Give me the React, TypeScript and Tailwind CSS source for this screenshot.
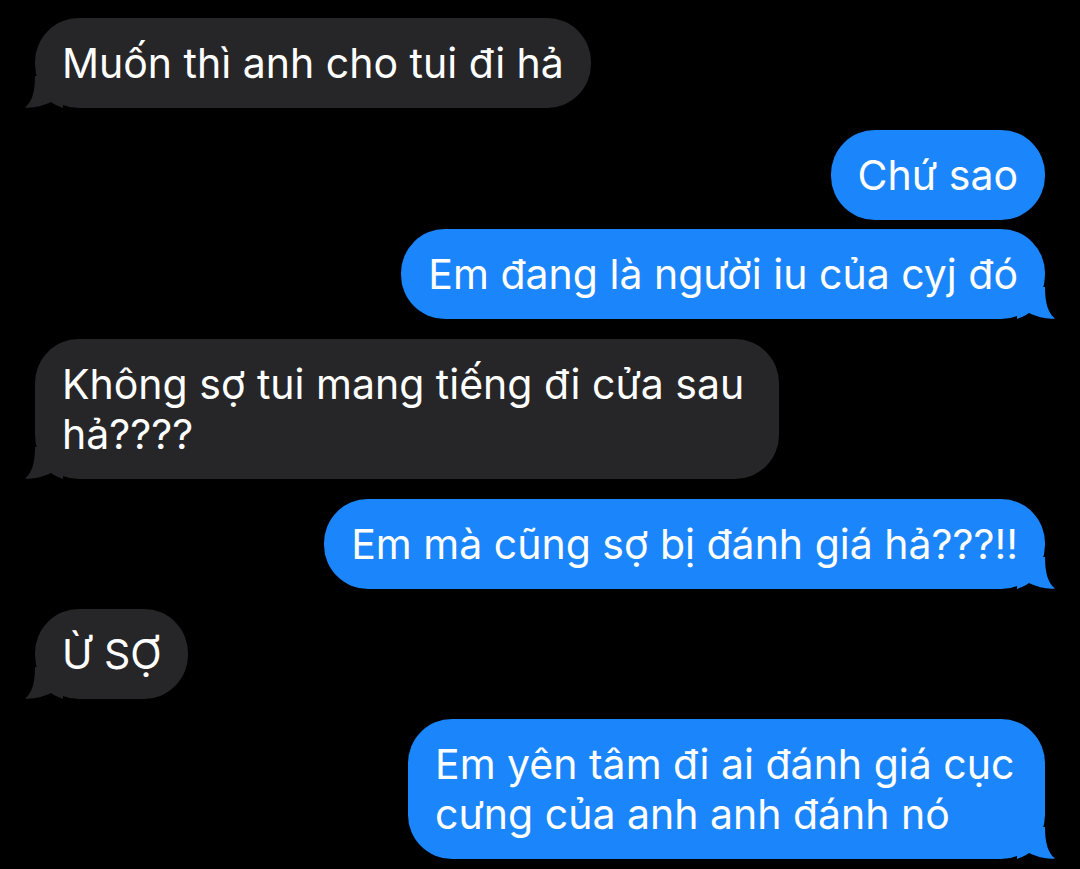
const GRAY = '#262628';
const BLUE = '#1b86fb';

type Msg = { text: string; me: boolean; tail: boolean; gap: string; width?: string };

const MESSAGES: Msg[] = [
  { text: 'Muốn thì anh cho tui đi hả', me: false, tail: true, gap: 'mt-0' },
  { text: 'Chứ sao', me: true, tail: false, gap: 'mt-[22px]' },
  { text: 'Em đang là người iu của cyj đó', me: true, tail: true, gap: 'mt-[9px]' },
  { text: 'Không sợ tui mang tiếng đi cửa sau hả????', me: false, tail: true, gap: 'mt-[20px]', width: 'w-[744px]' },
  { text: 'Em mà cũng sợ bị đánh giá hả???!!', me: true, tail: true, gap: 'mt-[20px]' },
  { text: 'Ừ SỢ', me: false, tail: true, gap: 'mt-[20px]' },
  { text: 'Em yên tâm đi ai đánh giá cục cưng của anh anh đánh nó', me: true, tail: true, gap: 'mt-[20px]', width: 'w-[637px]' },
];

function Tail({ me }: { me: boolean }) {
  return (
    <svg
      width="40"
      height="32"
      viewBox="0 0 40 32"
      className={me ? 'absolute -right-3 bottom-0' : 'absolute -left-3 bottom-0 -scale-x-100'}
      aria-hidden
    >
      <path
        d="M0 0 H28 C28 16 31 26 38 31.5 C31 32.5 20 30 12 26 C8 29 4 30.5 0 32 Z"
        fill={me ? BLUE : GRAY}
      />
    </svg>
  );
}

function Bubble({ m }: { m: Msg }) {
  return (
    <div className={`flex ${m.me ? 'justify-end' : 'justify-start'} ${m.gap}`}>
      <div
        className={`relative rounded-[44px] px-[27px] py-[20px] text-white text-[41px] leading-[50px] ${m.width ?? ''}`}
        style={{ backgroundColor: m.me ? BLUE : GRAY }}
      >
        {m.tail && <Tail me={m.me} />}
        <span className="relative">{m.text}</span>
      </div>
    </div>
  );
}

export default function App() {
  return (
    <div className="min-h-[869px] w-[1080px] bg-black pt-[18px] px-[35px] font-['Inter','Noto_Sans',sans-serif]">
      {MESSAGES.map((m, i) => (
        <Bubble key={i} m={m} />
      ))}
    </div>
  );
}
